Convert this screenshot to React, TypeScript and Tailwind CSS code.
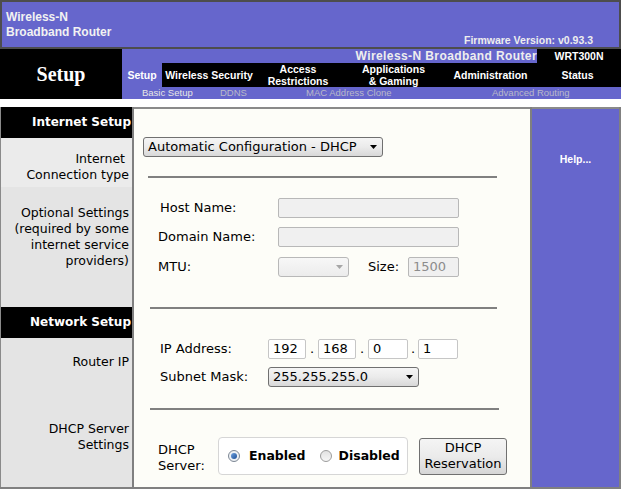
import clsx from 'clsx'

const purple = 'bg-[#6666cc]'

function Select({ className, text, disabled }: { className?: string; text?: string; disabled?: boolean }) {
  return <div
    className={clsx(
      'flex h-[20px] items-center justify-between rounded-[3px] border bg-linear-to-b pl-[4px] pr-[5px]',
      disabled
        ? 'border-[#b8b8b8] from-[#f7f7f7] to-[#ececec]'
        : 'border-[#707070] from-[#f5f5f5] via-[#ebebeb] to-[#d8d8d8]',
      className
    )}
  >
    <span className="leading-[18px] whitespace-nowrap">{text}</span>
    <svg width="7" height="4" viewBox="0 0 7 4">
      <path d="M0 0h7L3.5 4z" fill={disabled ? '#a6a6a6' : '#000'} />
    </svg>
  </div>
}

function Input({ className, value, disabled }: { className?: string; value?: string; disabled?: boolean }) {
  return <div
    className={clsx(
      'h-[20px] rounded-[2px] border px-[4px] leading-[18px]',
      disabled ? 'border-[#b8b8b8] bg-[#f0f0f0] text-[#8c8c8c]' : 'border-[#c6c6c6] bg-white text-black',
      className
    )}
  >
    {value}
  </div>
}

function Radio({ checked }: { checked?: boolean }) {
  return <div
    className={clsx(
      'flex h-[12px] w-[12px] items-center justify-center rounded-full border',
      checked ? 'border-[#7d8794] bg-[#eef1f4]' : 'border-[#9c9c9c] bg-linear-to-b from-[#e2e2e2] to-[#f6f6f6]'
    )}
  >
    {checked && <div className="h-[6px] w-[6px] rounded-full bg-linear-to-br from-[#6fa2e0] to-[#1d4f96]" />}
  </div>
}

function Rule({ className }: { className?: string }) {
  return <div className={clsx('h-[2px] bg-[#808080]', className)} />
}

export default function App() {
  return <div className="relative h-[489px] w-[621px] overflow-hidden bg-white font-['DejaVu_Sans',Verdana,sans-serif] text-black">
    {/* top banner */}
    <div className={clsx('flex h-[49px] justify-between border-2 border-[#4d4d4d] font-["Liberation_Sans",Arial,sans-serif]', purple)}>
      <div className="pl-[4px] pt-[8px] text-[12px] font-bold leading-[15px] text-[#f2f2f2]">
        <div>Wireless-N</div>
        <div>Broadband Router</div>
      </div>
      <div className="self-end pb-[1px] pr-[26px] text-[10.5px] font-bold leading-[12px] text-[#eeeeee]">
        Firmware Version: v0.93.3
      </div>
    </div>

    {/* navigation */}
    <div className="flex h-[50px] font-['Liberation_Sans',Arial,sans-serif]">
      <div className="flex w-[122px] items-center justify-center bg-black font-['Liberation_Serif',serif] text-[20px] font-bold text-white">
        Setup
      </div>
      <div className="flex flex-1 flex-col">
        <div className="flex h-[14px]">
          <div className={clsx('flex-1 text-right text-[12px] font-bold leading-[14px] tracking-[0.4px] text-[#eeeeee]', purple)}>
            Wireless-N Broadband Router
          </div>
          <div className="w-[84px] bg-black text-center text-[10.5px] font-bold leading-[14px] text-white">WRT300N</div>
        </div>
        <div className="flex h-[24px] text-[10.5px] font-bold leading-[12px] text-white">
          <div className={clsx('flex w-[40px] items-center justify-center', purple)}>Setup</div>
          <div className="flex flex-1 items-center bg-black text-center">
            <div className="w-[94px]">Wireless Security</div>
            <div className="w-[84px]">Access<br />Restrictions</div>
            <div className="w-[107px]">Applications<br />&amp; Gaming</div>
            <div className="w-[87px]">Administration</div>
            <div className="flex-1">Status</div>
          </div>
        </div>
        <div className={clsx('flex h-[12px] pl-[20px] text-[9.5px] leading-[12px] text-[#b9b9c9]', purple)}>
          <span className="w-[78px] text-[#e6e6e6]">Basic Setup</span>
          <span className="w-[86px]">DDNS</span>
          <span className="w-[186px]">MAC Address Clone</span>
          <span>Advanced Routing</span>
        </div>
      </div>
    </div>

    <div className="h-[8px]" />

    {/* body */}
    <div className="flex h-[382px] border-b-2 border-[#808080]">
      {/* left labels */}
      <div className="w-[132px] border-l border-[#8a8a8a] bg-[#e4e4e4] pr-[3px] text-right text-[12.5px] leading-[16px]">
        <div className="-mr-[3px] h-[31px] bg-black pr-[1px] text-[12px] font-bold leading-[31px] text-white">Internet Setup</div>
        <div className="-mr-[3px] h-[49px] bg-[#ebebeb] pr-[3px] pt-[13px]">
          Internet&nbsp;<br />Connection type
        </div>
        <div className="mt-[18px]">
          Optional Settings<br />(required by some<br />internet service<br />providers)
        </div>
        <div className="-mr-[3px] mt-[38px] h-[31px] bg-black pr-[1px] text-[12px] font-bold leading-[31px] text-white">Network Setup</div>
        <div className="mt-[16px]">Router IP</div>
        <div className="mt-[51px]">DHCP Server<br />Settings</div>
      </div>

      <div className="w-[2px] bg-[#808080]" />

      {/* form */}
      <div className="flex w-[396px] flex-col border-t-2 border-[#8a8a8a] bg-[#fdfdf8] text-[13px]">
        <Select className="ml-[9px] mt-[28px] w-[240px]" text="Automatic Configuration - DHCP" />
        <Rule className="ml-[14px] mt-[19px] w-[349px]" />

        <div className="mt-[20px] flex h-[20px] items-center">
          <span className="w-[144px] pl-[26px]">Host Name:</span>
          <Input className="w-[181px]" disabled />
        </div>
        <div className="mt-[9px] flex h-[20px] items-center">
          <span className="w-[144px] pl-[24px]">Domain Name:</span>
          <Input className="w-[181px]" disabled />
        </div>
        <div className="mt-[10px] flex h-[20px] items-center">
          <span className="w-[144px] pl-[24px]">MTU:</span>
          <Select className="w-[71px]" disabled />
          <span className="ml-[19px] w-[40px]">Size:</span>
          <Input className="w-[51px]" value="1500" disabled />
        </div>

        <Rule className="ml-[16px] mt-[30px] w-[347px]" />

        <div className="mt-[30px] flex h-[20px] items-center">
          <span className="w-[134px] pl-[26px]">IP Address:</span>
          <Input className="w-[38px]" value="192" />
          <span className="w-[12px] text-center">.</span>
          <Input className="w-[38px]" value="168" />
          <span className="w-[12px] text-center">.</span>
          <Input className="w-[40px]" value="0" />
          <span className="w-[10px] text-center">.</span>
          <Input className="w-[40px]" value="1" />
        </div>
        <div className="mt-[8px] flex h-[20px] items-center">
          <span className="w-[134px] pl-[26px]">Subnet Mask:</span>
          <Select className="w-[151px]" text="255.255.255.0" />
        </div>

        <Rule className="ml-[16px] mt-[21px] w-[349px]" />

        <div className="mt-[27px] flex h-[38px] items-center">
          <span className="w-[84px] pl-[24px] pt-[3px] leading-[16px]">DHCP<br />Server:</span>
          <div className="flex h-[38px] w-[190px] items-center rounded-[4px] border border-[#d6d6d6] bg-white pl-[9px] text-[12.5px] font-bold">
            <Radio checked />
            <span className="ml-[9px]">Enabled</span>
            <div className="ml-[14px]"><Radio /></div>
            <span className="ml-[7px]">Disabled</span>
          </div>
          <div className="ml-[11px] flex h-[37px] w-[88px] flex-col items-center justify-center rounded-[3px] border border-[#707070] bg-linear-to-b from-[#f4f4f4] via-[#ebebeb] to-[#d6d6d6] leading-[16px]">
            <span>DHCP</span>
            <span>Reservation</span>
          </div>
        </div>
      </div>

      <div className="w-[2px] bg-[#808080]" />

      {/* help */}
      <div className={clsx('w-[87px] border-t-2 border-[#8a8a8a] pt-[43px] text-center font-["Liberation_Sans",Arial,sans-serif] text-[10.5px] font-bold text-white', purple)}>
        Help...
      </div>

      <div className="w-[2px] bg-[#808080]" />
    </div>
  </div>
}
